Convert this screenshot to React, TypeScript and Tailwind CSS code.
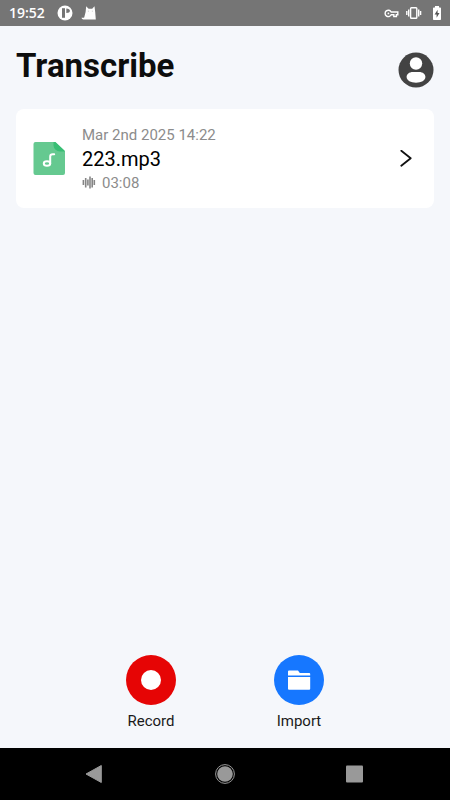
import type { ReactNode } from "react";

type Recording = {
  id: number;
  name: string;
  date: string;
  duration: string;
};

const recordings: Recording[] = [
  { id: 1, name: "223.mp3", date: "Mar 2nd 2025 14:22", duration: "03:08" },
];

function StatusBar() {
  return (
    <div className="flex h-[26px] items-center justify-between bg-[#757575] pr-2 pl-[9px] text-white">
      <div className="flex items-center">
        <span className="font-['Open_Sans',sans-serif] text-sm leading-5 font-semibold">19:52</span>
        <svg className="ml-3 h-4 w-4" viewBox="0 0 16 16" aria-hidden="true">
          <circle cx="8" cy="8" r="7.5" fill="#fff" />
          <path d="M5 3.2h3v9.6H5z" fill="#757575" />
          <path d="M9.3 3.4c2.4 0 3.6 1 3.6 2.400s-1.200 2.200-3.600 2.200z" fill="#757575" />
        </svg>
        <svg className="ml-2 h-4 w-4" viewBox="0 0 16 16" aria-hidden="true">
          <path
            d="M5.2 1.2 7.6 3.800h3.600l2.300-2.600.7 5.800.6 7.500H3.400C1.600 14.500.4 13.800.7 12.400c.7.6 1.600.6 2.500.1L4.600 7z"
            fill="#fff"
          />
          <path d="M6.900 5.800h.8v.8h-.8zM10.900 5.800h.8v.8h-.8z" fill="#aaa" />
        </svg>
      </div>
      <div className="flex items-center">
        <svg className="h-4 w-4" viewBox="0 0 16 16" fill="none" stroke="#fff" strokeWidth="1.4" aria-hidden="true">
          <path d="M7.200 7A3.200 3.200 0 1 0 7.200 9.800H9.800v1.700h2.600V9.800h1.400V7z" />
          <circle cx="4.400" cy="8.400" r=".9" fill="#fff" stroke="none" />
        </svg>
        <svg className="ml-[6px] h-4 w-4" viewBox="0 0 16 16" fill="none" stroke="#fff" strokeWidth="1.400" aria-hidden="true">
          <rect x="4.600" y="2.700" width="6.200" height="10.600" rx=".8" />
          <path d="M2.700 4.500v7M12.700 4.500v7M.8 6v4M14.600 6v4" />
        </svg>
        <svg className="ml-[10px] h-4 w-[10px]" viewBox="0 0 10 16" aria-hidden="true">
          <path
            d="M3 1h4v1.500h1.200a.8.8 0 0 1 .8.8v10.900a.8.8 0 0 1-.8.8H1.800a.8.8 0 0 1-.8-.8V3.300a.8.8 0 0 1 .8-.8H3z"
            fill="#fff"
          />
          <path d="M5.600 4.800 2.600 9.500h2v3.200L7.500 8H5.600z" fill="#555" />
        </svg>
      </div>
    </div>
  );
}

function AvatarIcon() {
  return (
    <svg className="h-9 w-9" viewBox="0 0 36 36" aria-hidden="true">
      <circle cx="18" cy="18" r="17.500" fill="#434343" />
      <circle cx="18" cy="11.500" r="6.200" fill="#fff" />
      <path
        d="M15 20h6c4 0 6.400 2.200 6.400 5 0 3.500-4.200 5.700-9.400 5.700s-9.400-2.200-9.400-5.700c0-2.800 2.400-5 6.400-5z"
        fill="#fff"
      />
    </svg>
  );
}

function AudioFileIcon() {
  return (
    <svg className="h-[34px] w-8 shrink-0" viewBox="0 0 32 34" aria-hidden="true">
      <path d="M2.500 0H22L32 9.500V31a2 2 0 0 1-2 2H2.500a2 2 0 0 1-2-2V2a2 2 0 0 1 2-2z" fill="#65c990" />
      <path d="M20.500 0H22.500L32 9V9.500H27a6.500 6.500 0 0 1-6.500-6z" fill="#38be74" />
      <ellipse cx="14" cy="21.500" rx="3.200" ry="2.300" fill="none" stroke="#fff" strokeWidth="2" />
      <path d="M17.200 21.500V14.500c0-1.600 1-2.300 2.500-2.300h1.500" fill="none" stroke="#fff" strokeWidth="2" strokeLinecap="round" />
    </svg>
  );
}

function WaveIcon() {
  return (
    <svg className="h-[14px] w-[14px]" viewBox="0 0 14 14" fill="none" stroke="#858585" strokeWidth="1.600" aria-hidden="true">
      <path d="M1.400 4v5M3.700 2v9.500M5.900 3.500v6M8 .5v12M10.200 2v9.500M12.300 4v5" />
    </svg>
  );
}

function RecordingCard({ item }: { item: Recording }) {
  return (
    <a href={`#recording-${item.id}`} className="flex h-[99px] items-center rounded-lg bg-white pr-[22px] pl-[17px]">
      <AudioFileIcon />
      <div className="ml-[17px] min-w-0 flex-1">
        <div className="text-[15px] leading-5 text-[#8c8c8c]">{item.date}</div>
        <div className="truncate text-xl leading-7 text-black">{item.name}</div>
        <div className="flex items-center gap-[6px] text-[15px] leading-5 text-[#8c8c8c]">
          <WaveIcon />
          <span>{item.duration}</span>
        </div>
      </div>
      <svg className="h-[18px] w-3" viewBox="0 0 12 18" fill="none" stroke="#111" strokeWidth="1.800" aria-hidden="true">
        <path d="M1.300.8 10.700 8.200 1.300 15.800" strokeLinecap="round" strokeLinejoin="round" />
      </svg>
    </a>
  );
}

function ActionButton({ label, children }: { label: string; children: ReactNode }) {
  return (
    <button type="button" className="flex w-[52px] flex-col items-center gap-[6px]">
      {children}
      <span className="text-[15px] leading-5 text-[#1a1a1a]">{label}</span>
    </button>
  );
}

function NavigationBar() {
  return (
    <nav className="grid h-[52px] grid-cols-3 place-items-center bg-black px-[30px]">
      <button type="button" aria-label="Back">
        <svg className="h-5 w-5" viewBox="0 0 20 20" aria-hidden="true">
          <path d="M16.300 1.500v17L1 10z" fill="#999" stroke="#999" strokeLinejoin="round" />
        </svg>
      </button>
      <button type="button" aria-label="Home">
        <svg className="h-5 w-5" viewBox="0 0 20 20" aria-hidden="true">
          <circle cx="10" cy="10" r="9.400" fill="none" stroke="#999" />
          <circle cx="10" cy="10" r="7.800" fill="#999" />
        </svg>
      </button>
      <button type="button" aria-label="Recent apps">
        <svg className="h-5 w-5" viewBox="0 0 20 20" aria-hidden="true">
          <rect x="1" y="1.500" width="17" height="17" rx="1" fill="#999" />
        </svg>
      </button>
    </nav>
  );
}

export default function App() {
  return (
    <div className="flex min-h-screen flex-col bg-[#f5f7fb] font-[Roboto,sans-serif]">
      <StatusBar />
      <header className="flex items-start justify-between px-4 pt-5">
        <h1 className="text-[33px] leading-10 font-bold text-[#0d0d0d]">Transcribe</h1>
        <button type="button" aria-label="Account" className="pt-[6px]">
          <AvatarIcon />
        </button>
      </header>

      <main className="flex-1 px-4 pt-[21px]">
        <ul className="space-y-3">
          {recordings.map((item) => (
            <li key={item.id}>
              <RecordingCard item={item} />
            </li>
          ))}
        </ul>
      </main>

      <div className="flex justify-center gap-24 pb-[17px]">
        <ActionButton label="Record">
          <svg className="h-[50px] w-[50px]" viewBox="0 0 50 50" aria-hidden="true">
            <circle cx="25" cy="25" r="25" fill="#e60505" />
            <circle cx="25" cy="25" r="10" fill="#fff" />
          </svg>
        </ActionButton>
        <ActionButton label="Import">
          <svg className="h-[50px] w-[50px]" viewBox="0 0 50 50" aria-hidden="true">
            <circle cx="25" cy="25" r="25" fill="#1677ff" />
            <path d="M14 20.500V16.400a1 1 0 0 1 1-1h9l1.800 2.600h9.400a1 1 0 0 1 1 1v1.500z" fill="#fff" />
            <path d="M14 22h22.200v11.700a1 1 0 0 1-1 1H15a1 1 0 0 1-1-1z" fill="#fff" />
          </svg>
        </ActionButton>
      </div>
      <NavigationBar />
    </div>
  );
}
